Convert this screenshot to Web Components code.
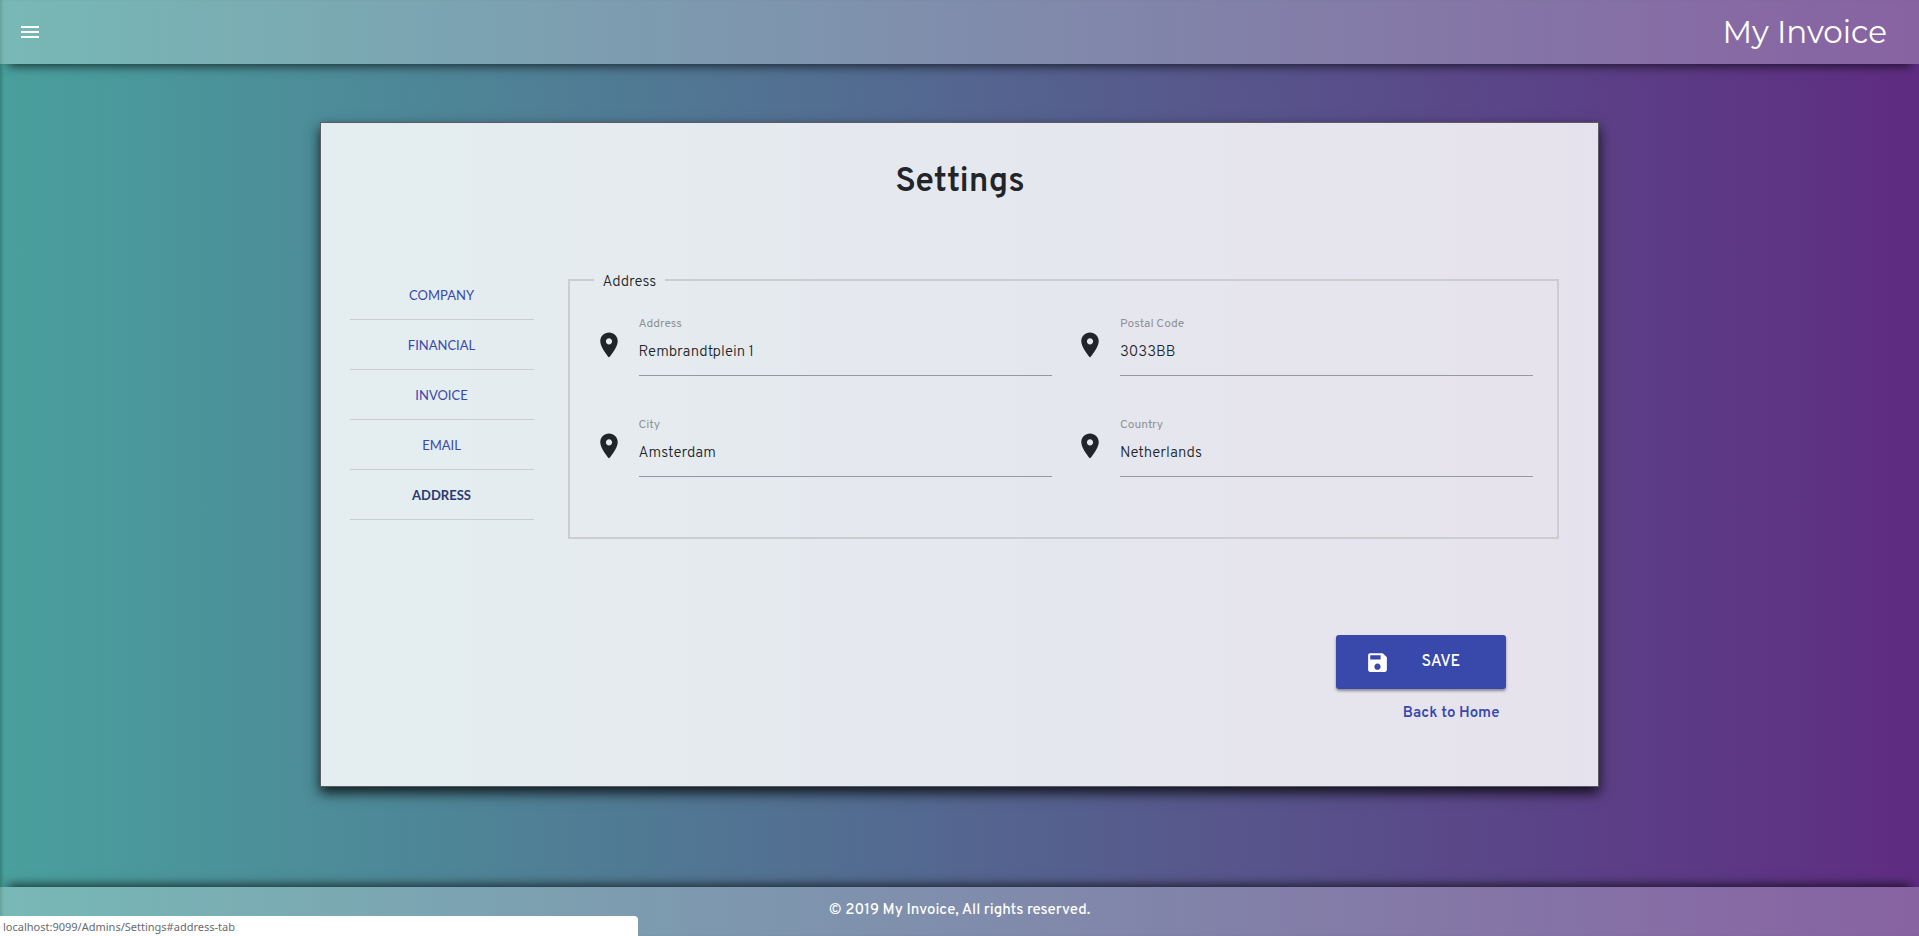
<!DOCTYPE html>
<html lang="en">
<head>
<meta charset="utf-8">
<meta name="viewport" content="width=device-width, initial-scale=1">
<title>Settings - My Invoice</title>
<style>
  html { height: 100%; }
  body {
    margin: 0;
    min-height: 100%;
    background: linear-gradient(to right, #49a09d, #5f2c82);
    color: #212529;
    font: 300 15px/24px Overpass, Roboto, sans-serif;
  }
</style>
</head>
<body>
<invoice-app></invoice-app>

<script>
const define = (name, html, setup) => {
  const template = document.createElement('template');
  template.innerHTML = html;
  customElements.define(name, class extends HTMLElement {
    constructor() {
      super();
      this.attachShadow({ mode: 'open' }).append(template.content.cloneNode(true));
    }
    connectedCallback() {
      if (setup) setup(this, this.shadowRoot);
    }
  });
};

define('app-header', `
  <style>
    :host {
      display: flex; align-items: center; justify-content: space-between;
      height: 64px; padding: 0 32px 0 18px;
      background: rgba(255, 255, 255, .26);
      box-shadow: 0 10px 10px -8px rgba(0, 0, 0, .7);
      color: #fff;
    }
    button { display: flex; padding: 0; border: 0; background: none; color: inherit; cursor: pointer; }
    svg { width: 24px; height: 24px; fill: currentColor; }
    .brand { font: 400 31px/40px Montserrat, Inter, sans-serif; }
  </style>
  <button type="button" aria-label="Open menu">
    <svg viewBox="0 0 24 24"><path d="M3 18h18v-2H3v2zm0-5h18v-2H3v2zm0-7v2h18V6H3z"/></svg>
  </button>
  <span class="brand"><slot></slot></span>`);

define('app-footer', `
  <style>
    :host {
      display: block; height: 35px; padding-top: 14px;
      background: rgba(255, 255, 255, .26);
      box-shadow: 0 -10px 10px -8px rgba(0, 0, 0, .7);
      color: #fff; text-align: center; font-weight: 500; line-height: 20px;
    }
  </style>
  <slot></slot>`);

define('link-status', `
  <style>
    :host {
      position: fixed; left: 0; bottom: 0; width: 33.25%; height: 20px;
      box-sizing: border-box; padding-left: 3px;
      background: #fff; border-top-right-radius: 4px;
      color: #666b70; font: 400 11px/22px "Segoe UI", "Noto Sans", sans-serif;
    }
  </style>
  <slot></slot>`);

define('settings-card', `
  <style>
    :host {
      display: block; box-sizing: border-box;
      width: 66.7%; margin: 58px auto 100px; padding: 36px 39px 62px 29px;
      border: 1px solid #5c5c66;
      background: rgba(255, 255, 255, .85); background-clip: padding-box;
      box-shadow: 0 6px 12px rgba(0, 0, 0, .8);
    }
    h1 { margin: 0 0 63px; padding-left: 11px; font-size: 34px; line-height: 48px; font-weight: 600; text-align: center; }
    .body { display: grid; grid-template-columns: 184px 1fr; column-gap: 34px; align-items: start; }
    .actions { margin: 96px 53px 0 0; }
  </style>
  <h1><slot name="title"></slot></h1>
  <div class="body"><slot name="tabs"></slot><slot></slot></div>
  <div class="actions"><slot name="actions"></slot></div>`);

define('settings-tab', `
  <style>
    :host { display: block; border-bottom: 1px solid #c9ced1; }
    a {
      display: block; padding-top: 2px; text-align: center; text-decoration: none;
      color: #3949ab; font: 400 13px/47px Lato, sans-serif;
    }
    :host([active]) a { color: #2b3a73; font-weight: 700; }
  </style>
  <a><slot></slot></a>`, (el, root) => {
    root.querySelector('a').href = el.getAttribute('href');
  });

define('field-group', `
  <style>
    :host { display: block; margin-top: -3px; }
    fieldset {
      margin: 0; min-width: 0; padding: 23px 24px 60px;
      border: 2px solid #cbcdd1;
    }
    legend { padding: 6px 9px 0; line-height: 20px; }
    .grid { display: grid; grid-template-columns: 1fr 1fr; gap: 41px 23px; }
  </style>
  <fieldset>
    <legend></legend>
    <div class="grid"><slot></slot></div>
  </fieldset>`, (el, root) => {
    root.querySelector('legend').textContent = el.getAttribute('label');
  });

define('place-field', `
  <style>
    :host { display: flex; align-items: center; gap: 15px; }
    svg { flex: none; width: 30px; height: 30px; margin-bottom: 2px; fill: #212529; }
    .box { flex: 1; min-width: 0; border-bottom: 1px solid #9698a0; }
    label { display: block; color: #8f9297; font-size: 12px; line-height: 16px; font-weight: 400; }
    input {
      display: block; box-sizing: border-box; width: 100%; height: 43px; margin: 0;
      padding: 0 0 3px; border: 0; outline: 0; background: none;
      color: inherit; font: inherit;
    }
  </style>
  <svg viewBox="0 0 24 24" aria-hidden="true"><path d="M12 2C8.13 2 5 5.13 5 9c0 5.25 7 13 7 13s7-7.75 7-13c0-3.87-3.13-7-7-7zm0 9.5c-1.38 0-2.5-1.12-2.5-2.5s1.12-2.5 2.5-2.5 2.5 1.12 2.5 2.5-1.12 2.5-2.5 2.5z"/></svg>
  <div class="box">
    <label for="value"></label>
    <input id="value" type="text">
  </div>`, (el, root) => {
    root.querySelector('label').textContent = el.getAttribute('label');
    root.querySelector('input').value = el.getAttribute('value');
  });

define('form-actions', `
  <style>
    :host { display: flex; flex-direction: column; align-items: flex-end; gap: 15px; }
    button {
      display: flex; align-items: center; gap: 31px;
      width: 170px; height: 54px; padding: 0 0 0 29px;
      border: 0; border-radius: 3px; background: #3949ab; color: #fff;
      box-shadow: 0 2px 3px rgba(0, 0, 0, .4);
      font: inherit; font-size: 16px; font-weight: 500; cursor: pointer;
    }
    svg { width: 25px; height: 25px; fill: currentColor; }
    a { margin-right: 7px; color: #3949ab; font-weight: 600; line-height: 20px; text-decoration: none; }
  </style>
  <button type="submit">
    <svg viewBox="0 0 24 24" aria-hidden="true"><path d="M17 3H5c-1.11 0-2 .9-2 2v14c0 1.1.89 2 2 2h14c1.1 0 2-.9 2-2V7l-4-4zm-5 16c-1.66 0-3-1.34-3-3s1.34-3 3-3 3 1.34 3 3-1.34 3-3 3zm3-10H5V5h10v4z"/></svg>
    <span>SAVE</span>
  </button>
  <a href="#home">Back to Home</a>`);

define('invoice-app', `
  <style>
    :host { display: flex; flex-direction: column; min-height: 100vh; box-shadow: inset 3px 0 3px -1px rgba(0, 60, 40, .3); }
    main { flex: 1; display: flow-root; }
    nav { display: block; }
  </style>
  <app-header>My Invoice</app-header>
  <main>
    <settings-card>
      <span slot="title">Settings</span>
      <nav slot="tabs" aria-label="Settings sections">
        <settings-tab href="#company-tab">COMPANY</settings-tab>
        <settings-tab href="#financial-tab">FINANCIAL</settings-tab>
        <settings-tab href="#invoice-tab">INVOICE</settings-tab>
        <settings-tab href="#email-tab">EMAIL</settings-tab>
        <settings-tab href="#address-tab" active>ADDRESS</settings-tab>
      </nav>
      <field-group label="Address">
        <place-field label="Address" value="Rembrandtplein 1"></place-field>
        <place-field label="Postal Code" value="3033BB"></place-field>
        <place-field label="City" value="Amsterdam"></place-field>
        <place-field label="Country" value="Netherlands"></place-field>
      </field-group>
      <form-actions slot="actions"></form-actions>
    </settings-card>
  </main>
  <app-footer>© 2019 My Invoice, All rights reserved.</app-footer>
  <link-status>localhost:9099/Admins/Settings#address-tab</link-status>`);
</script>
</body>
</html>
